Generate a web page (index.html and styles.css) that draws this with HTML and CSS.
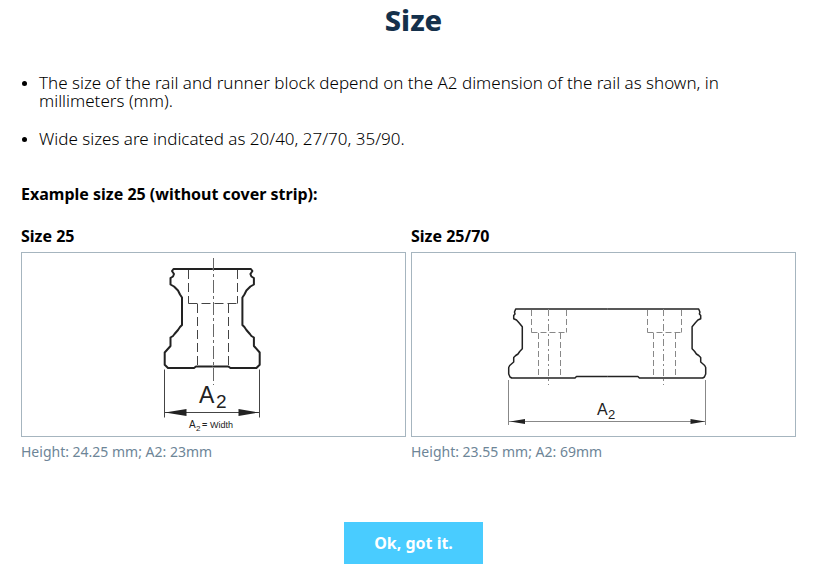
FILE: index.html
```html
<!DOCTYPE html>
<html lang="en">
<head>
<meta charset="utf-8">
<title>Size</title>
<link rel="stylesheet" href="styles.css">
</head>
<body>
<main class="dialog">
  <h1 class="title">Size</h1>
  <ul class="notes">
    <li>The size of the rail and runner block depend on the A2 dimension of the rail as shown, in millimeters (mm).</li>
    <li>Wide sizes are indicated as 20/40, 27/70, 35/90.</li>
  </ul>
  <h2 class="heading">Example size 25 (without cover strip):</h2>
  <div class="examples">
    <section class="example">
      <h3 class="heading">Size 25</h3>
      <figure class="figure">
        <svg class="drawing" viewBox="0 0 383 183" role="img" aria-label="Rail profile, size 25">
          <defs>
            <path id="half25" d="M190.2 16H151.5L150 18L152 21L151 23.500L148.500 25V31.500L152 33.500L156 37.500L158 41.500L160 44.500V72L158 74L156 77L152.500 81L151 83L148.500 84.500V93L142.700 99.500V111.700L146 115H172L174 113.500H190.200"/>
          </defs>
          <g class="outline">
            <use href="#half25"/>
            <use href="#half25" transform="translate(380.4 0) scale(-1 1)"/>
          </g>
          <path class="hidden" stroke-dasharray="9 4" d="M166.500 17V50.500M215.500 17V50.500M166.500 50.500H215.500M175.500 51V113M206.500 51V113"/>
          <path class="center" stroke-dasharray="13 3 3 3" d="M191.500 5V132"/>
          <path class="measure" d="M142.500 116.500V164.500M237.500 116.500V164.500M143 159.500H237"/>
          <path class="arrow" d="M143 159.500L164.500 156V163ZM237 159.500L216.500 156V163Z"/>
          <text class="label" x="177" y="150" font-size="23">A</text>
          <text class="label" x="194" y="155" font-size="19">2</text>
          <text class="label" x="167" y="175" font-size="10">A</text>
          <text class="label" x="174" y="178" font-size="8">2</text>
          <text class="label" x="180" y="175" font-size="9" font-weight="700">=</text>
          <text class="label" x="188" y="175" font-size="9">Width</text>
        </svg>
      </figure>
      <p class="caption">Height: 24.25 mm; A2: 23mm</p>
    </section>
    <section class="example">
      <h3 class="heading">Size 25/70</h3>
      <figure class="figure">
        <svg class="drawing" viewBox="0 0 383 183" role="img" aria-label="Rail profile, size 25/70">
          <defs>
            <path id="half70" d="M195.200 56H103.700L102.500 59L103 61L101.700 62.500V65.700L104.500 67L107 69.700L110.300 73.700V95.700L107.700 98.500L106 101L103.700 102.500L101.700 104.500V109L97.700 112.500L96.700 114.500V121L98 124L99.700 125H163L164.500 123.500H195.200"/>
          </defs>
          <g class="outline outline-thin">
            <use href="#half70"/>
            <use href="#half70" transform="translate(390.4 0) scale(-1 1)"/>
          </g>
          <path class="hidden hidden-light" stroke-dasharray="6 3" d="M119.500 57V79.500M154.500 57V79.500M119.500 79.500H154.500M126.500 80V125M148.500 80V125M235.500 57V79.500M269.500 57V79.500M235.500 79.500H269.500M241.500 80V125M263.500 80V125"/>
          <path class="center hidden-light" stroke-dasharray="7 3 2 3" d="M136.500 56V132M251.500 56V132"/>
          <path class="measure measure-light" d="M96.500 127V172M293.500 127V172M97 168.500H293"/>
          <path class="arrow" d="M98 168.500L113 166V171ZM293 168.500L278.500 166V171Z"/>
          <text class="label" x="185" y="161.500" font-size="16">A</text>
          <text class="label" x="196" y="165.500" font-size="13">2</text>
        </svg>
      </figure>
      <p class="caption">Height: 23.55 mm; A2: 69mm</p>
    </section>
  </div>
  <button class="confirm" type="button">Ok, got it.</button>
</main>
</body>
</html>
```
FILE: styles.css
```css
* {
  box-sizing: border-box;
}

body {
  margin: 0;
  background: #fff;
  color: #000;
  font-family: "Noto Sans", "Open Sans", sans-serif;
  font-size: 16px;
  line-height: 18px;
}

.dialog {
  display: flex;
  flex-direction: column;
  padding: 0 10px 0 21px;
}

.title {
  margin: 0;
  color: #14304b;
  font-size: 29px;
  font-weight: 800;
  line-height: 40px;
  text-align: center;
}

.notes {
  display: flex;
  flex-direction: column;
  gap: 20px;
  margin: 34px 80px 37px 0;
  padding-left: 18px;
  font-size: 17px;
  font-weight: 300;
}

.notes li::marker {
  font-size: 14px;
}

.heading {
  margin: 0;
  font-size: 16px;
  font-weight: 700;
  line-height: 18px;
}

.examples {
  display: grid;
  grid-template-columns: 1fr 1fr;
  gap: 5px;
  margin: 24px 10px 0 0;
}

.figure {
  margin: 7px 0 6px;
  border: 1px solid #a6b5bf;
}

.drawing {
  display: block;
  width: 100%;
  height: auto;
}

.outline {
  fill: none;
  stroke: #222;
  stroke-width: 2;
  stroke-linejoin: round;
}

.outline-thin {
  stroke-width: 1.5;
}

.hidden {
  fill: none;
  stroke: #444;
}

.center {
  fill: none;
  stroke: #666;
}

.hidden-light {
  stroke: #888;
}

.measure {
  fill: none;
  stroke: #444;
}

.measure-light {
  stroke: #888;
}

.arrow {
  fill: #222;
}

.label {
  fill: #222;
  font-family: "Liberation Sans", sans-serif;
}

.caption {
  margin: 0;
  color: #6d8597;
  font-size: 14px;
}

.confirm {
  align-self: center;
  margin-top: 61px;
  padding: 12px 30px;
  border: 0;
  background: #49ccff;
  color: #fff;
  font: 700 16px/18px "Noto Sans", "Open Sans", sans-serif;
}
```
